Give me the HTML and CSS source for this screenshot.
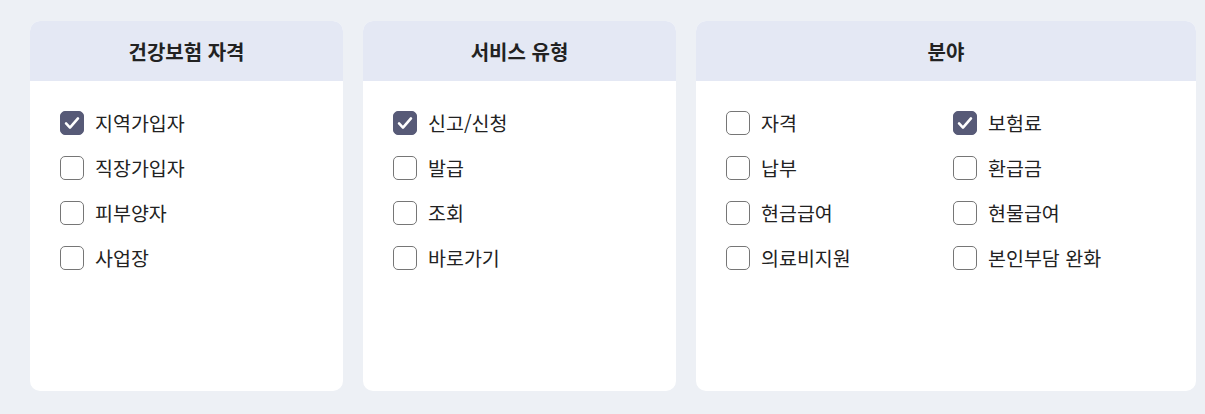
FILE: index.html
```html
<!DOCTYPE html>
<html lang="ko">
<head>
<meta charset="utf-8">
<link rel="stylesheet" href="styles.css">
</head>
<body>
<div class="panels">
  <section class="card card-narrow">
    <h2 class="card-head">건강보험 자격</h2>
    <div class="card-body list">
      <label class="opt"><span class="box checked"><svg viewBox="0 0 24 24"><path d="M5.5 12.5l4.3 4.5 8.7-10" /></svg></span>지역가입자</label>
      <label class="opt"><span class="box"></span>직장가입자</label>
      <label class="opt"><span class="box"></span>피부양자</label>
      <label class="opt"><span class="box"></span>사업장</label>
    </div>
  </section>
  <section class="card card-narrow">
    <h2 class="card-head">서비스 유형</h2>
    <div class="card-body list">
      <label class="opt"><span class="box checked"><svg viewBox="0 0 24 24"><path d="M5.5 12.5l4.3 4.5 8.7-10" /></svg></span>신고/신청</label>
      <label class="opt"><span class="box"></span>발급</label>
      <label class="opt"><span class="box"></span>조회</label>
      <label class="opt"><span class="box"></span>바로가기</label>
    </div>
  </section>
  <section class="card card-wide">
    <h2 class="card-head">분야</h2>
    <div class="card-body grid2">
      <label class="opt"><span class="box"></span>자격</label>
      <label class="opt"><span class="box checked"><svg viewBox="0 0 24 24"><path d="M5.5 12.5l4.3 4.5 8.7-10" /></svg></span>보험료</label>
      <label class="opt"><span class="box"></span>납부</label>
      <label class="opt"><span class="box"></span>환급금</label>
      <label class="opt"><span class="box"></span>현금급여</label>
      <label class="opt"><span class="box"></span>현물급여</label>
      <label class="opt"><span class="box"></span>의료비지원</label>
      <label class="opt"><span class="box"></span>본인부담 완화</label>
    </div>
  </section>
</div>
</body>
</html>
```
FILE: styles.css
```css
* { box-sizing: border-box; }
html, body { margin: 0; padding: 0; }
body {
  background: #edf0f5;
  font-family: "Noto Sans CJK KR", "Noto Sans", sans-serif;
  color: #222;
  width: 1205px;
  height: 414px;
  overflow: hidden;
}
.panels {
  display: flex;
  gap: 20px;
  padding: 21px 0 0 30px;
}
.card {
  background: #fff;
  border-radius: 10px;
  height: 370px;
  overflow: hidden;
  display: flex;
  flex-direction: column;
}
.card-narrow { width: 313px; }
.card-wide { width: 500px; }
.card-head {
  margin: 0;
  height: 60px;
  background: #e4e8f4;
  display: flex;
  align-items: center;
  justify-content: center;
  font-size: 20px;
  font-weight: 700;
  color: #222;
}
.card-body {
  padding: 30px 30px 0 30px;
}
.list {
  display: flex;
  flex-direction: column;
  gap: 21px;
}
.grid2 {
  display: grid;
  grid-template-columns: 1fr 1fr;
  column-gap: 14px;
  row-gap: 21px;
}
.opt {
  display: flex;
  align-items: center;
  gap: 11px;
  height: 24px;
  font-size: 19.5px;
  line-height: 24px;
  color: #222;
}
.box {
  width: 24px;
  height: 24px;
  flex: none;
  border: 1px solid #767676;
  border-radius: 5px;
  background: #fff;
  display: flex;
  align-items: center;
  justify-content: center;
}
.box.checked {
  background: #575a77;
  border-color: #575a77;
}
.box svg {
  width: 24px;
  height: 24px;
  fill: none;
  stroke: #fff;
  stroke-width: 2.8;
  stroke-linecap: round;
  stroke-linejoin: round;
}
```
